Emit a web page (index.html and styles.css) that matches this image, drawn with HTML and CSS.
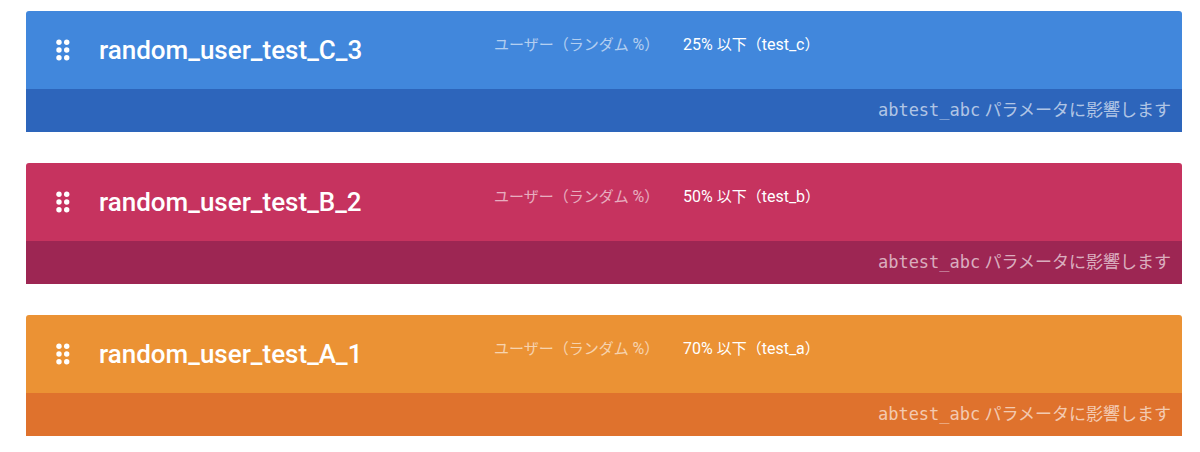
FILE: index.html
```html
<!DOCTYPE html>
<html lang="ja">
<head>
<meta charset="utf-8">
<title>条件</title>
<link rel="stylesheet" href="styles.css">
</head>
<body>
<main class="conditions">
  <article class="card blue">
    <div class="card-main">
      <button class="drag" type="button" aria-label="並べ替え"><svg viewBox="0 0 14 22"><circle cx="3" cy="3.2" r="2.7"/><circle cx="10.7" cy="3.2" r="2.7"/><circle cx="3" cy="11" r="2.7"/><circle cx="10.7" cy="11" r="2.7"/><circle cx="3" cy="18.8" r="2.7"/><circle cx="10.7" cy="18.8" r="2.7"/></svg></button>
      <h2 class="name">random_user_test_C_3</h2>
      <dl class="rule"><dt>ユーザー（ランダム <span class="pct">%</span>）</dt><dd>25% <span class="ja">以下（</span>test_c<span class="ja">）</span></dd></dl>
    </div>
    <p class="card-foot"><code>abtest_abc</code> パラメータに影響します</p>
  </article>
  <article class="card pink">
    <div class="card-main">
      <button class="drag" type="button" aria-label="並べ替え"><svg viewBox="0 0 14 22"><circle cx="3" cy="3.2" r="2.7"/><circle cx="10.7" cy="3.2" r="2.7"/><circle cx="3" cy="11" r="2.7"/><circle cx="10.7" cy="11" r="2.7"/><circle cx="3" cy="18.8" r="2.7"/><circle cx="10.7" cy="18.8" r="2.7"/></svg></button>
      <h2 class="name">random_user_test_B_2</h2>
      <dl class="rule"><dt>ユーザー（ランダム <span class="pct">%</span>）</dt><dd>50% <span class="ja">以下（</span>test_b<span class="ja">）</span></dd></dl>
    </div>
    <p class="card-foot"><code>abtest_abc</code> パラメータに影響します</p>
  </article>
  <article class="card orange">
    <div class="card-main">
      <button class="drag" type="button" aria-label="並べ替え"><svg viewBox="0 0 14 22"><circle cx="3" cy="3.2" r="2.7"/><circle cx="10.7" cy="3.2" r="2.7"/><circle cx="3" cy="11" r="2.7"/><circle cx="10.7" cy="11" r="2.7"/><circle cx="3" cy="18.8" r="2.7"/><circle cx="10.7" cy="18.8" r="2.7"/></svg></button>
      <h2 class="name">random_user_test_A_1</h2>
      <dl class="rule"><dt>ユーザー（ランダム <span class="pct">%</span>）</dt><dd>70% <span class="ja">以下（</span>test_a<span class="ja">）</span></dd></dl>
    </div>
    <p class="card-foot"><code>abtest_abc</code> パラメータに影響します</p>
  </article>
</main>
</body>
</html>
```
FILE: styles.css
```css
* { box-sizing: border-box; margin: 0; padding: 0; }
body { background: #fff; color: #fff; font-family: Roboto, "Noto Sans CJK JP", sans-serif; }
.conditions { display: flex; flex-direction: column; gap: 31px; padding: 11px 18px 16px 26px; }
.card { border-radius: 3px 3px 0 0; overflow: hidden; }
.card-main { display: grid; grid-template-columns: 73px 395px 1fr; align-items: center; min-height: 78px; }
.drag { display: flex; justify-content: center; background: none; border: 0; cursor: grab; }
.drag svg { width: 14px; height: 22px; fill: #fff; }
.name { font-size: 26px; line-height: 32px; font-weight: 500; }
.rule { display: grid; grid-template-columns: 189px 1fr; align-self: start; padding-top: 22px; font-size: 16px; line-height: 24px; white-space: nowrap; }
.rule dt { font-size: 15px; opacity: 0.6; }
.ja { font-size: 15px; }
.pct { font-size: 16px; }
.card-foot { padding-right: 11px; text-align: right; font-size: 17px; line-height: 43px; color: rgba(255, 255, 255, 0.64); }
.card-foot code { font-family: "DejaVu Sans Mono", monospace; font-size: 17px; }
.blue { background: #4187dc; }
.blue .card-foot { background: #2d65bb; }
.pink { background: #c6335f; }
.pink .card-foot { background: #9d2653; }
.orange { background: #eb9234; }
.orange .card-foot { background: #df722d; }
```
